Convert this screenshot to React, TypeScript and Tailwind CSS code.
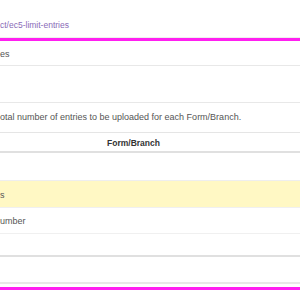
export default function App() {
  return (
    <div
      className="w-[300px] h-[300px] overflow-hidden bg-white text-[9px] text-[#555]"
      style={{ fontFamily: '"Liberation Sans", Arial, sans-serif' }}
    >
      <div className="h-[37px] flex items-end pb-[5px]">
        <span className="text-[#8a6bb8] text-[8.5px] whitespace-nowrap">ct/ec5-limit-entries</span>
      </div>
      <div className="border-t border-[#eee]" />
      <div className="h-[3px] bg-[#ff1ff0]" />
      <div className="h-[25px] flex items-center pt-[3px] border-b border-[#e8e8e8]">
        <span className="whitespace-nowrap">es</span>
      </div>
      <div className="h-[37px] border-b border-[#e8e8e8]" />
      <div className="h-[30px] flex items-center pt-[1px] border-b border-[#e5e5e5]">
        <span className="whitespace-nowrap">otal number of entries to be uploaded for each Form/Branch.</span>
      </div>
      <div className="h-[20px] flex items-center justify-center pt-[2px] border-b-2 border-[#e0e0e0]">
        <span className="font-bold text-[8.5px] text-[#333] whitespace-nowrap mr-[33px]">Form/Branch</span>
      </div>
      <div className="h-[28px] border-b border-[#eee]" />
      <div className="h-[26px] flex items-center pt-[3px] bg-[#fff8c4]">
        <span className="whitespace-nowrap">s</span>
      </div>
      <div className="h-[27px] flex items-center pt-[3px] border-t border-[#f0f0f0] border-b border-[#e8e8e8]">
        <span className="whitespace-nowrap">umber</span>
      </div>
      <div className="h-[23px] border-b-2 border-[#e0e0e0]" />
      <div className="h-[27px] border-b-2 border-[#e8e8e8]" />
      <div className="h-[3px]" />
      <div className="h-[3px] bg-[#ff1ff0]" />
    </div>
  );
}
